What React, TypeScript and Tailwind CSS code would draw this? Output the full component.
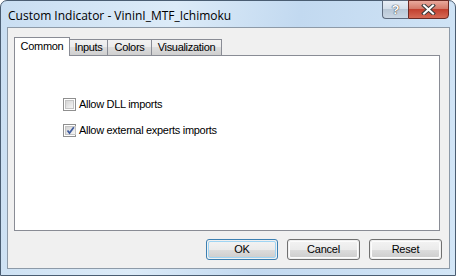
import React from "react";

const tabs = [
  { t: "Common", w: "w-[56px]" },
  { t: "Inputs", w: "w-[38px]" },
  { t: "Colors", w: "w-[44px]" },
  { t: "Visualization", w: "w-[70px]" },
];

const Checkbox = ({ checked }: { checked?: boolean }) => (
  <span className="w-[13px] h-[13px] border border-[#8f8f8f] bg-white p-[1px] flex">
    <span className="flex-1 border border-[#c4c4c4] bg-gradient-to-br from-[#d4d4d4] to-[#f6f6f6] flex items-center justify-center">
      {checked && (
        <svg width="9" height="9" viewBox="0 0 9 9">
          <path d="M1.5 4.5 L3.5 7 L7.8 1.2" fill="none" stroke="#3e5b9e" strokeWidth="1.7" />
        </svg>
      )}
    </span>
  </span>
);

const Button = ({ label, main }: { label: string; main?: boolean }) => (
  <button
    className={
      "h-[21px] rounded-[3px] border text-[11px] tracking-[-0.2px] text-black p-[1px] " +
      (main ? "w-[72px] border-[#3c7fb1]" : "w-[73px] border-[#707070]")
    }
  >
    <span
      className={
        "h-full w-full rounded-[2px] flex items-center justify-center bg-[linear-gradient(#f2f2f2_0%,#ebebeb_50%,#dddddd_50%,#cfcfcf_100%)] " +
        (main ? "border border-[#9fd5f4]" : "border border-[#fcfcfc]")
      }
    >
      {label}
    </span>
  </button>
);

export default function App() {
  return (
    <div className="w-[456px] h-[276px] bg-white" style={{ fontFamily: '"Liberation Sans", Arial, sans-serif' }}>
      <div className="w-full h-full flex flex-col rounded-t-[7px] border border-[#4a5d72] bg-[linear-gradient(100deg,#c9def2_0%,#dcebf8_35%,#c2d9f0_60%,#d3e6f7_100%)]">
        {/* title bar */}
        <div className="h-[26px] flex items-start justify-between">
          <div
            className="pl-[7px] pt-[6px] text-[12px] text-black"
            style={{ fontFamily: '"Open Sans", "Liberation Sans", sans-serif' }}
          >
            Custom Indicator - VininI_MTF_Ichimoku
          </div>
          <div className="flex mr-[6px] -mt-[1px]">
            <div className="w-[26px] h-[19px] rounded-bl-[4px] border border-[#5d6b7e] border-r-0 bg-[linear-gradient(#e7eef6_0%,#d2dde9_50%,#b8c7d6_50%,#cad7e4_100%)] flex items-center justify-center">
              <span className="text-[13px] font-bold text-white leading-none [text-shadow:0_0_1px_#333,0_0_1px_#333]">?</span>
            </div>
            <div className="w-[41px] h-[19px] rounded-br-[4px] border border-[#6b2a24] bg-[linear-gradient(#e9a99c_0%,#d47a6a_45%,#c2402f_50%,#d66a55_100%)] flex items-center justify-center">
              <svg width="15" height="11" viewBox="0 0 15 11">
                <path d="M3 1.5 L12 9.5 M12 1.5 L3 9.5" stroke="#3a3a3a" strokeWidth="4" strokeLinecap="square" />
                <path d="M3 1.5 L12 9.5 M12 1.5 L3 9.5" stroke="#ffffff" strokeWidth="2" strokeLinecap="square" />
              </svg>
            </div>
          </div>
        </div>
        {/* client area */}
        <div className="flex-1 ml-[6px] mr-[5px] mb-[6px] border border-[#8d9aa8] bg-[#f0f0f0] flex flex-col pl-[6px] pr-[9px] pt-[8px]">
          <div className="flex items-end h-[19px] text-[11px] tracking-[-0.3px] text-black">
            {tabs.map(({ t, w }, i) =>
              i === 0 ? (
                <div
                  key={t}
                  className={w + " h-[19px] border border-b-0 border-[#898c95] bg-white flex items-center justify-center relative z-10 -mb-[1px] pb-[1px]"}
                >
                  {t}
                </div>
              ) : (
                <div
                  key={t}
                  className={w + " h-[16px] border border-l-0 border-b-0 border-[#898c95] bg-[linear-gradient(#f2f2f2_0%,#ebebeb_50%,#dddddd_50%,#cfcfcf_100%)] flex items-center justify-center"}
                >
                  {t}
                </div>
              )
            )}
          </div>
          <div className="h-[176px] border border-[#898c95] bg-white flex flex-col gap-[11px] pl-[48px] pt-[41px] text-[11px] leading-[15px] tracking-[-0.3px] text-black">
            <label className="flex items-center gap-[3px]">
              <Checkbox />
              <span>Allow DLL imports</span>
            </label>
            <label className="flex items-center gap-[3px]">
              <Checkbox checked />
              <span>Allow external experts imports</span>
            </label>
          </div>
          <div className="flex justify-end gap-[9px] mt-[8px] -mr-[2px]">
            <Button label="OK" main />
            <Button label="Cancel" />
            <Button label="Reset" />
          </div>
        </div>
      </div>
    </div>
  );
}
